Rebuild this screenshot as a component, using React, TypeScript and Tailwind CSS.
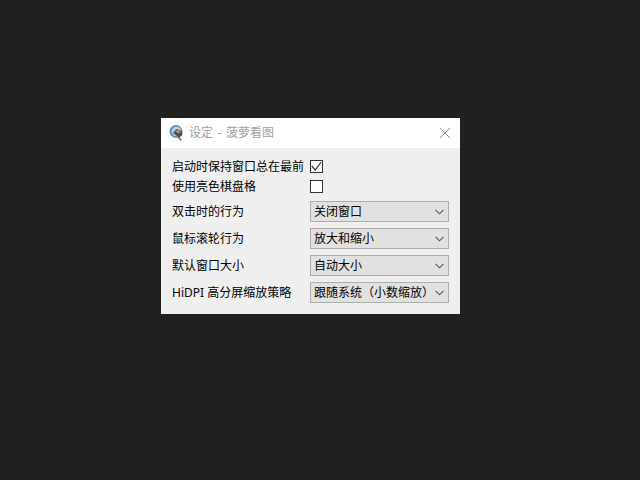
const FONT = 'font-["Noto_Sans","Noto_Sans_CJK_SC",sans-serif]';

const SELECTS = [
  { label: '双击时的行为', value: '关闭窗口' },
  { label: '鼠标滚轮行为', value: '放大和缩小' },
  { label: '默认窗口大小', value: '自动大小' },
  { label: 'HiDPI 高分屏缩放策略', value: '跟随系统（小数缩放）' },
];

function AppIcon() {
  return (
    <svg width="16" height="16" viewBox="0 0 16 16" className="-mt-[1px]">
      <path d="M9.5 12l2.5 3.5" stroke="#777777" strokeWidth="1.8" fill="none" />
      <circle cx="7" cy="6.5" r="6.5" fill="#5b8fc0" />
      <circle cx="7.5" cy="6.5" r="4.8" fill="#b5cde0" />
      <path d="M4 8l3.5-4 5.5 2 .5 4-3.5 2.5z" fill="#55504c" />
      <path d="M6.5 6l3-1 2.5 2-3 1.5z" fill="#b09a78" />
    </svg>
  );
}

function CheckBox({ checked }: { checked?: boolean }) {
  return (
    <div className="flex h-[13px] w-[13px] items-center justify-center border border-[#333333] bg-white">
      {checked && (
        <svg width="11" height="11" viewBox="0 0 11 11">
          <path d="M0.8 5l3.4 4 6-8" stroke="#333333" strokeWidth="1.2" fill="none" />
        </svg>
      )}
    </div>
  );
}

function Select({ value }: { value: string }) {
  return (
    <div className="flex h-[21px] w-[139px] items-center justify-between border border-[#adadad] bg-[#e1e1e1] pl-[3px] pr-[4px]">
      <span className="pt-[1px] text-[12px] leading-none whitespace-nowrap text-black">{value}</span>
      <svg width="9" height="6" viewBox="0 0 9 6" className="shrink-0">
        <path d="M0.5 0.8l4 4 4-4" stroke="#555555" strokeWidth="1.1" fill="none" />
      </svg>
    </div>
  );
}

export default function App() {
  return (
    <div className={`h-[480px] w-[640px] bg-[#202020] pl-[161px] pt-[118px] ${FONT}`}>
      <div className="h-[196px] w-[299px] bg-[#efefef]">
        <div className="flex h-[30px] items-center justify-between bg-white pl-[8px] pr-[9px]">
          <div className="flex items-center gap-[5px]">
            <AppIcon />
            <span className="-ml-[1px] text-[12px] leading-none text-[#a0a0a0] [word-spacing:1.5px]">设定 - 菠萝看图</span>
          </div>
          <svg width="12" height="12" viewBox="0 0 12 12">
            <path d="M1 1l10 10M11 1L1 11" stroke="#8c8c8c" strokeWidth="1" fill="none" />
          </svg>
        </div>
        <div className="pl-[11px] pt-[8px]">
          <div className="flex h-[20px] items-center">
            <span className="w-[138px] pt-[1px] text-[12px] leading-none text-black">启动时保持窗口总在最前</span>
            <CheckBox checked />
          </div>
          <div className="flex h-[20px] items-center">
            <span className="w-[138px] pt-[2px] text-[12px] leading-none text-black">使用亮色棋盘格</span>
            <CheckBox />
          </div>
          <div className="mt-[5px] flex flex-col gap-[6px]">
            {SELECTS.map((s) => (
              <div key={s.label} className="flex items-center">
                <span className="w-[138px] pt-[1px] text-[12px] leading-none text-black">{s.label}</span>
                <Select value={s.value} />
              </div>
            ))}
          </div>
        </div>
      </div>
    </div>
  );
}
